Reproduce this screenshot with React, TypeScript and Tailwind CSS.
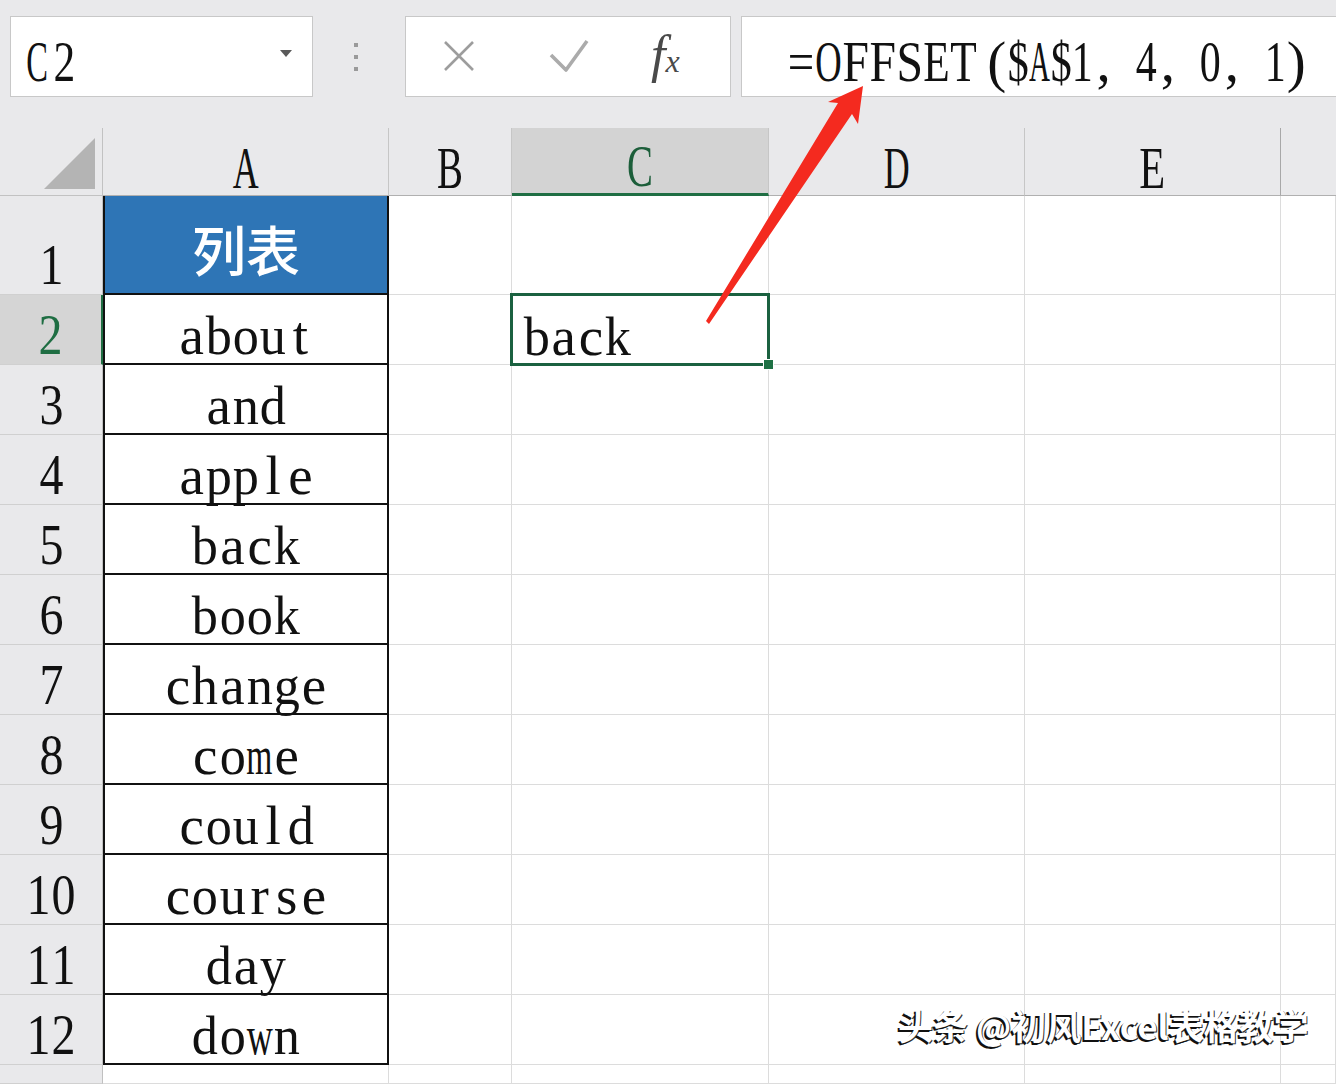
import React from "react";

const GW: Record<string, number> = {
  a: 0.444, b: 0.5, c: 0.444, d: 0.5, e: 0.444, g: 0.5, h: 0.5, k: 0.5, l: 0.278, m: 0.778,
  n: 0.5, o: 0.5, p: 0.5, r: 0.333, s: 0.389, t: 0.278, u: 0.5, w: 0.722, y: 0.5,
  A: 0.722, B: 0.667, C: 0.667, D: 0.722, E: 0.611, F: 0.556, O: 0.722, S: 0.556, T: 0.611,
  "0": 0.5, "1": 0.5, "2": 0.5, "3": 0.5, "4": 0.5, "5": 0.5, "6": 0.5, "7": 0.5, "8": 0.5, "9": 0.5,
  $: 0.5, "(": 0.333, ")": 0.333, ",": 0.25, "=": 0.564, " ": 0.25,
};

function Mono({ text, cell, size, fill = 0.96 }: { text: string; cell: number; size: number; fill?: number }) {
  return (
    <span className="inline-flex">
      {Array.from(text).map((ch, i) => {
        const w = (GW[ch] ?? 0.5) * size;
        const s = Math.min(1, (cell * fill) / w);
        return (
          <span key={i} className="inline-flex justify-center" style={{ width: cell }}>
            <span className="inline-block whitespace-pre" style={{ transform: `scaleX(${s})` }}>
              {ch === " " ? "\u00a0" : ch}
            </span>
          </span>
        );
      })}
    </span>
  );
}

const words = ["about", "and", "apple", "back", "book", "change", "come", "could", "course", "day", "down"];

function RowHeader({ n, active }: { n: string; active?: boolean }) {
  return (
    <div
      className={
        active
          ? "flex items-end justify-center bg-[#d5d5d5] text-[#1f6e43] border-b border-[#d0d0d0] border-r-2 border-r-[#1f6e43] text-[58px] leading-none"
          : "flex items-end justify-center bg-[#e9e9eb] text-[#111] border-b border-[#d0d0d0] border-r border-r-[#c0c0c0] text-[58px] leading-none"
      }
    >
      {n ? <Mono text={n} cell={25} size={58} /> : null}
    </div>
  );
}

function Blank() {
  return <div className="bg-white border-r border-b border-[#dcdcdc]" />;
}

export default function App() {
  return (
    <div className="relative w-[1336px] h-[1084px] overflow-hidden bg-[#e9e9eb] font-['Liberation_Serif',serif] text-[#111]">
      {/* toolbar */}
      <div className="h-[128px] flex items-start pt-[16px] pl-[10px]">
        <div className="w-[303px] h-[81px] bg-white border border-[#c8c8c8] flex items-end justify-between pl-[13px] pr-[20px] pb-[6px]">
          <span className="text-[57px] leading-none">
            <Mono text="C2" cell={26.5} size={57} fill={0.82} />
          </span>
          <span className="self-center w-0 h-0 border-l-[6px] border-r-[6px] border-t-[7px] border-l-transparent border-r-transparent border-t-[#5a5a5a]" />
        </div>
        <div className="w-[92px] h-[81px] flex flex-col items-start justify-center gap-[8px] pl-[41px]">
          <span className="w-[4px] h-[4px] bg-[#9a9a9a]" />
          <span className="w-[4px] h-[4px] bg-[#9a9a9a]" />
          <span className="w-[4px] h-[4px] bg-[#9a9a9a]" />
        </div>
        <div className="w-[326px] h-[81px] bg-white border border-[#c8c8c8] flex items-center pl-[37px]">
          <svg width="32" height="32" viewBox="0 0 32 32" className="mt-[-2px]">
            <path d="M2 2 L30 30 M30 2 L2 30" stroke="#9d9d9d" strokeWidth="2.6" fill="none" />
          </svg>
          <svg width="40" height="34" viewBox="0 0 40 34" className="ml-[74px] mt-[-2px]">
            <path d="M2 16 L17 31 L38 2" stroke="#ababab" strokeWidth="3.6" fill="none" strokeLinejoin="round" />
          </svg>
          <span className="ml-[62px] mt-[-4px] text-[#4a4a4a] italic leading-none">
            <span className="text-[52px]">f</span>
            <span className="text-[32px]">x</span>
          </span>
        </div>
        <div className="ml-[10px] flex-1 h-[81px] bg-white border border-r-0 border-[#c8c8c8] flex items-end pl-[46px] pb-[6px]">
          <span className="text-[57px] leading-none whitespace-nowrap">
            <Mono text="=OFFSET" cell={27} size={57} fill={0.98} />
            <span className="inline-block w-[9px]" />
            <Mono text="($A$1, 4, 0, 1)" cell={21.4} size={57} fill={0.98} />
          </span>
        </div>
      </div>

      {/* grid */}
      <div className="grid grid-cols-[103px_286px_123px_257px_256px_256px_55px] grid-rows-[68px_99px_repeat(11,70px)_19px]">
        {/* header row */}
        <div className="flex items-end justify-end pr-[7px] pb-[6px] border-r border-b border-[#c2c2c2]">
          <svg width="51" height="51" viewBox="0 0 51 51">
            <polygon points="0,51 51,51 51,0" fill="#b4b4b4" />
          </svg>
        </div>
        <div className="flex items-end justify-center border-r border-[#c6c6c6] border-b border-b-[#b0b0b0] text-[60px] leading-[0.9]">
          <Mono text="A" cell={27} size={60} />
        </div>
        <div className="flex items-end justify-center border-r border-[#c6c6c6] border-b border-b-[#b0b0b0] text-[60px] leading-[0.9]">
          <Mono text="B" cell={27} size={60} />
        </div>
        <div className="flex items-end justify-center bg-[#d3d3d3] text-[#1c5e3a] border-r border-[#c6c6c6] border-b-[3px] border-b-[#1f6e43] text-[60px] leading-[0.9]">
          <Mono text="C" cell={27} size={60} />
        </div>
        <div className="flex items-end justify-center border-r border-[#c6c6c6] border-b border-b-[#b0b0b0] text-[60px] leading-[0.9]">
          <Mono text="D" cell={27} size={60} />
        </div>
        <div className="flex items-end justify-center border-r border-[#a8a8a8] border-b border-b-[#b0b0b0] text-[60px] leading-[0.9]">
          <Mono text="E" cell={27} size={60} />
        </div>
        <div className="border-b border-[#b0b0b0]" />

        {/* row 1 */}
        <RowHeader n="1" />
        <div className="flex items-center justify-center pt-[8px] bg-[#2e75b6] border-l-2 border-r-2 border-b-2 border-[#111] text-white text-[54px] leading-none font-['Noto_Sans_CJK_SC',sans-serif] font-medium">
          列表
        </div>
        <Blank />
        <Blank />
        <Blank />
        <Blank />
        <Blank />

        {words.map((w, i) => (
          <React.Fragment key={w}>
            <RowHeader n={String(i + 2)} active={i === 0} />
            <div className="flex items-end justify-center bg-white border-l-2 border-r-2 border-b-2 border-[#111] text-[55px] leading-none">
              <Mono text={w} cell={27.2} size={55} />
            </div>
            <Blank />
            {i === 0 ? (
              <div className="relative flex items-end bg-white border-r border-b border-[#dcdcdc] pl-[11px] text-[55px] leading-none">
                <Mono text="back" cell={27.2} size={55} />
                <div className="absolute -left-[2px] -top-[2px] right-[-2px] bottom-[-2px] border-[3px] border-[#1b6140]" />
                <div className="absolute right-[-6px] bottom-[-6px] w-[11px] h-[11px] bg-[#1e7145] border border-white" />
              </div>
            ) : (
              <Blank />
            )}
            <Blank />
            <Blank />
            <Blank />
          </React.Fragment>
        ))}

        {/* row 13 partial */}
        <RowHeader n="" />
        <Blank />
        <Blank />
        <Blank />
        <Blank />
        <Blank />
        <Blank />
      </div>

      {/* red arrow annotation */}
      <svg className="absolute left-0 top-0 pointer-events-none" width="1336" height="1084" viewBox="0 0 1336 1084">
        <polygon points="863,86 858,124 852,114 709,324 706,321 838,103 828,102" fill="#f42a1f" />
      </svg>

      {/* watermark */}
      <div className="absolute left-[898px] top-[1007px] text-[35px] leading-none whitespace-nowrap text-white font-['Noto_Sans_CJK_SC',sans-serif] font-bold [text-shadow:-2px_2px_0_#111,1px_1px_0_#333]">
        头条 @初风Excel表格教学
      </div>
    </div>
  );
}
